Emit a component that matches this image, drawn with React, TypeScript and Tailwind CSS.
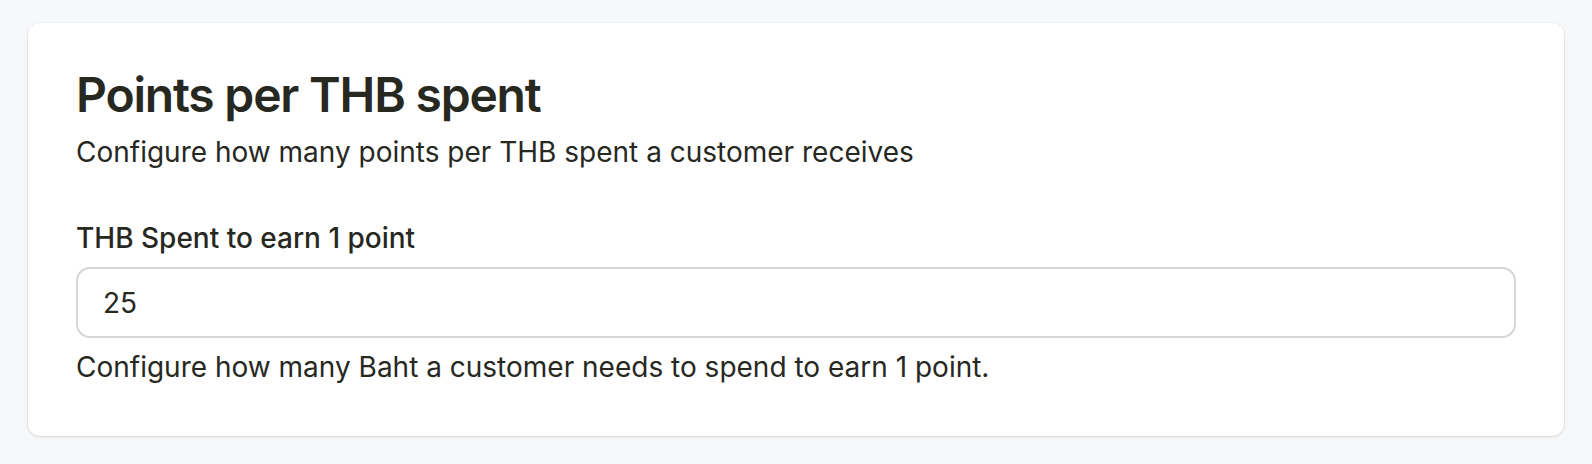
export default function App() {
  return (
    <div className="min-h-screen bg-[#f7f8fa] px-7 pt-[23px] pb-7 font-['Inter',sans-serif] text-[#27281f]">
      <section className="rounded-xl bg-white px-12 pt-12 pb-12 shadow-[0_1px_3px_rgba(0,0,0,0.12),0_0_0_1px_rgba(0,0,0,0.025)]">
        <h2 className="text-[48px] leading-none font-semibold tracking-[-0.025em]">Points per THB spent</h2>
        <p className="mt-3 text-[28px] leading-[42px]">
          Configure how many points per THB spent a customer receives
        </p>

        <div className="mt-11">
          <label htmlFor="thb-spent" className="block text-[28px] leading-[42px] font-medium">
            THB Spent to earn 1 point
          </label>
          <input
            id="thb-spent"
            type="text"
            defaultValue="25"
            className="mt-2 block h-[71px] w-full rounded-[14px] border-2 border-[#d6d6d6] bg-white px-[25px] text-[28px] text-[#27281f] outline-none"
          />
          <p className="mt-2 text-[28px] leading-[42px]">
            Configure how many Baht a customer needs to spend to earn 1 point.
          </p>
        </div>
      </section>
    </div>
  );
}
